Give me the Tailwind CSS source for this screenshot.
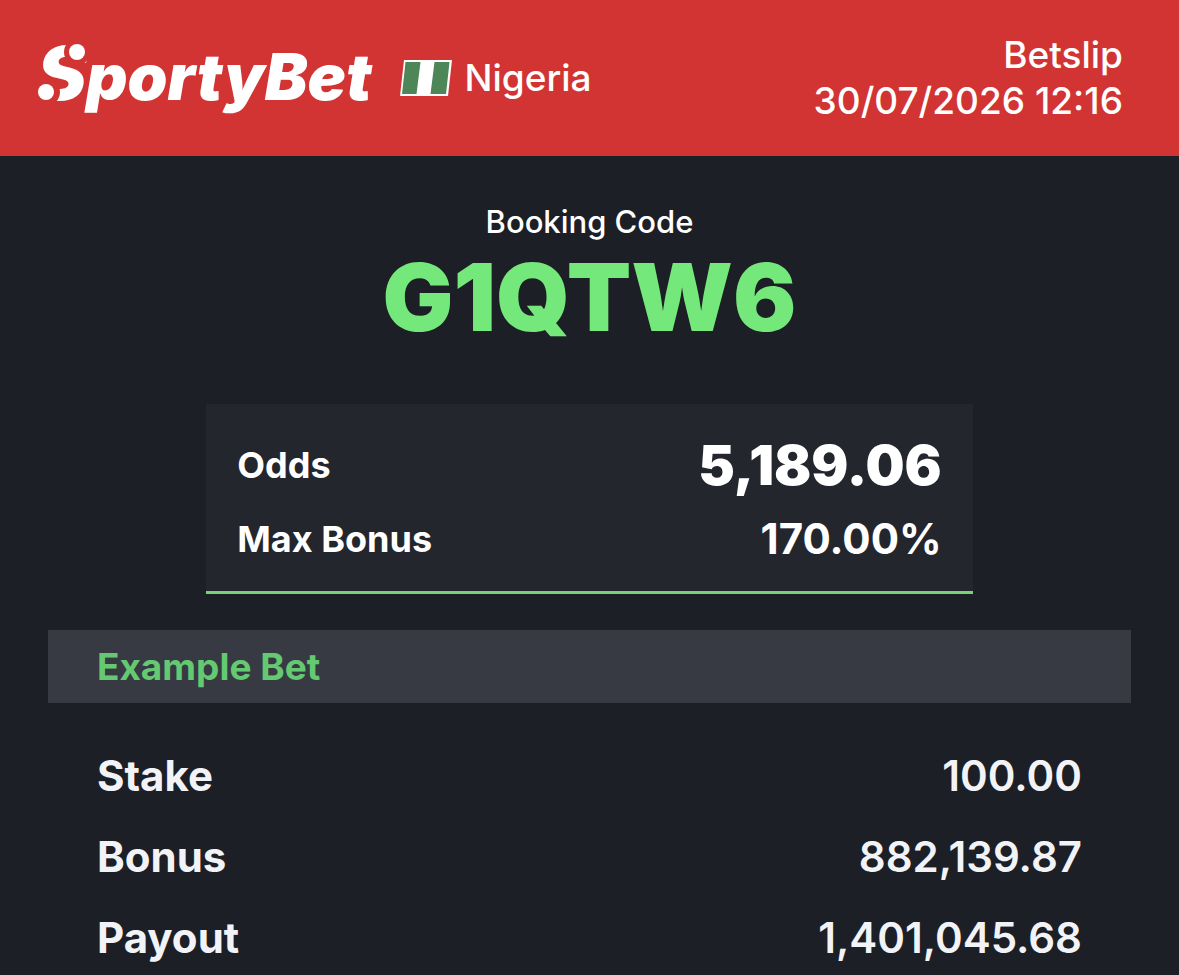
<!DOCTYPE html>
<html lang="en">
<head>
  <meta charset="UTF-8" />
  <meta name="viewport" content="width=device-width, initial-scale=1.0"/>
  <title>SportyBet Betslip</title>
  <script src="https://cdn.jsdelivr.net/npm/@tailwindcss/browser@4"></script>
</head>
<body class="bg-[#1c1f26] text-white font-['Inter',sans-serif]">

  <header class="bg-[#d13433] pl-[37px] pr-14 py-8 flex justify-between items-center">
    <div class="flex items-center">
      <h1 class="relative pb-1.5 font-black italic text-[64px] leading-[76px]"><span class="text-[74px]">S</span>portyBet
        <!-- dots on the S -->
        <span class="absolute left-8 top-[9px] size-4 rounded-full bg-white ring-5 ring-[#d13433]"></span>
        <span class="absolute left-px top-[49px] size-4 rounded-full bg-white ring-6 ring-[#d13433]"></span>
      </h1>
      <svg class="ml-[27px] w-[54px] h-[38px]" viewBox="0 0 54 38" role="img" aria-label="Nigeria flag">
        <path d="M5 1H53L49 37H1Z" fill="#fff"/>
        <path d="M6.500 3H21.500L17.500 35H3Z" fill="#4d8657"/>
        <path d="M35.500 3H50.500L47 35H31.500Z" fill="#4d8657"/>
      </svg>
      <span class="ml-3 text-[37px] leading-[46px] font-medium">Nigeria</span>
    </div>
    <div class="text-right text-[37px] leading-[46px] font-medium">
      <p>Betslip</p>
      <p>30/07/2026 12:16</p>
    </div>
  </header>

  <main class="pt-[46px]">
    <div class="text-center">
      <p class="text-[31px] leading-[40px] font-medium">Booking Code</p>
      <h2 class="mt-[7px] text-[94px] leading-[96px] font-black text-[#75e87b]">G1QTW6</h2>
    </div>

    <dl class="mt-[59px] mx-auto w-[65%] px-[31px] pt-6 pb-[15px] bg-[#24262e] border-b-3 border-[#77d37a] leading-[74px]">
      <div class="flex justify-between items-center">
        <dt class="text-[36px] font-bold">Odds</dt>
        <dd class="text-[55px] font-black">5,189.06</dd>
      </div>
      <div class="flex justify-between items-center">
        <dt class="text-[36px] font-bold">Max Bonus</dt>
        <dd class="text-[42px] font-bold">170.00%</dd>
      </div>
    </dl>

    <section class="mt-9 mx-12">
      <h3 class="bg-[#373943] px-[49px] py-4 text-[37px] leading-[41px] font-bold text-[#64c971]">Example Bet</h3>

      <dl class="mt-[49px] px-[49px] flex flex-col gap-[33px] text-[42px] leading-[48px] text-[#f2f3f7]">
        <div class="flex justify-between">
          <dt class="font-bold">Stake</dt>
          <dd class="font-semibold">100.00</dd>
        </div>
        <div class="flex justify-between">
          <dt class="font-bold">Bonus</dt>
          <dd class="font-semibold">882,139.87</dd>
        </div>
        <div class="flex justify-between">
          <dt class="font-bold">Payout</dt>
          <dd class="font-semibold">1,401,045.68</dd>
        </div>
      </dl>
    </section>
  </main>

</body>
</html>
